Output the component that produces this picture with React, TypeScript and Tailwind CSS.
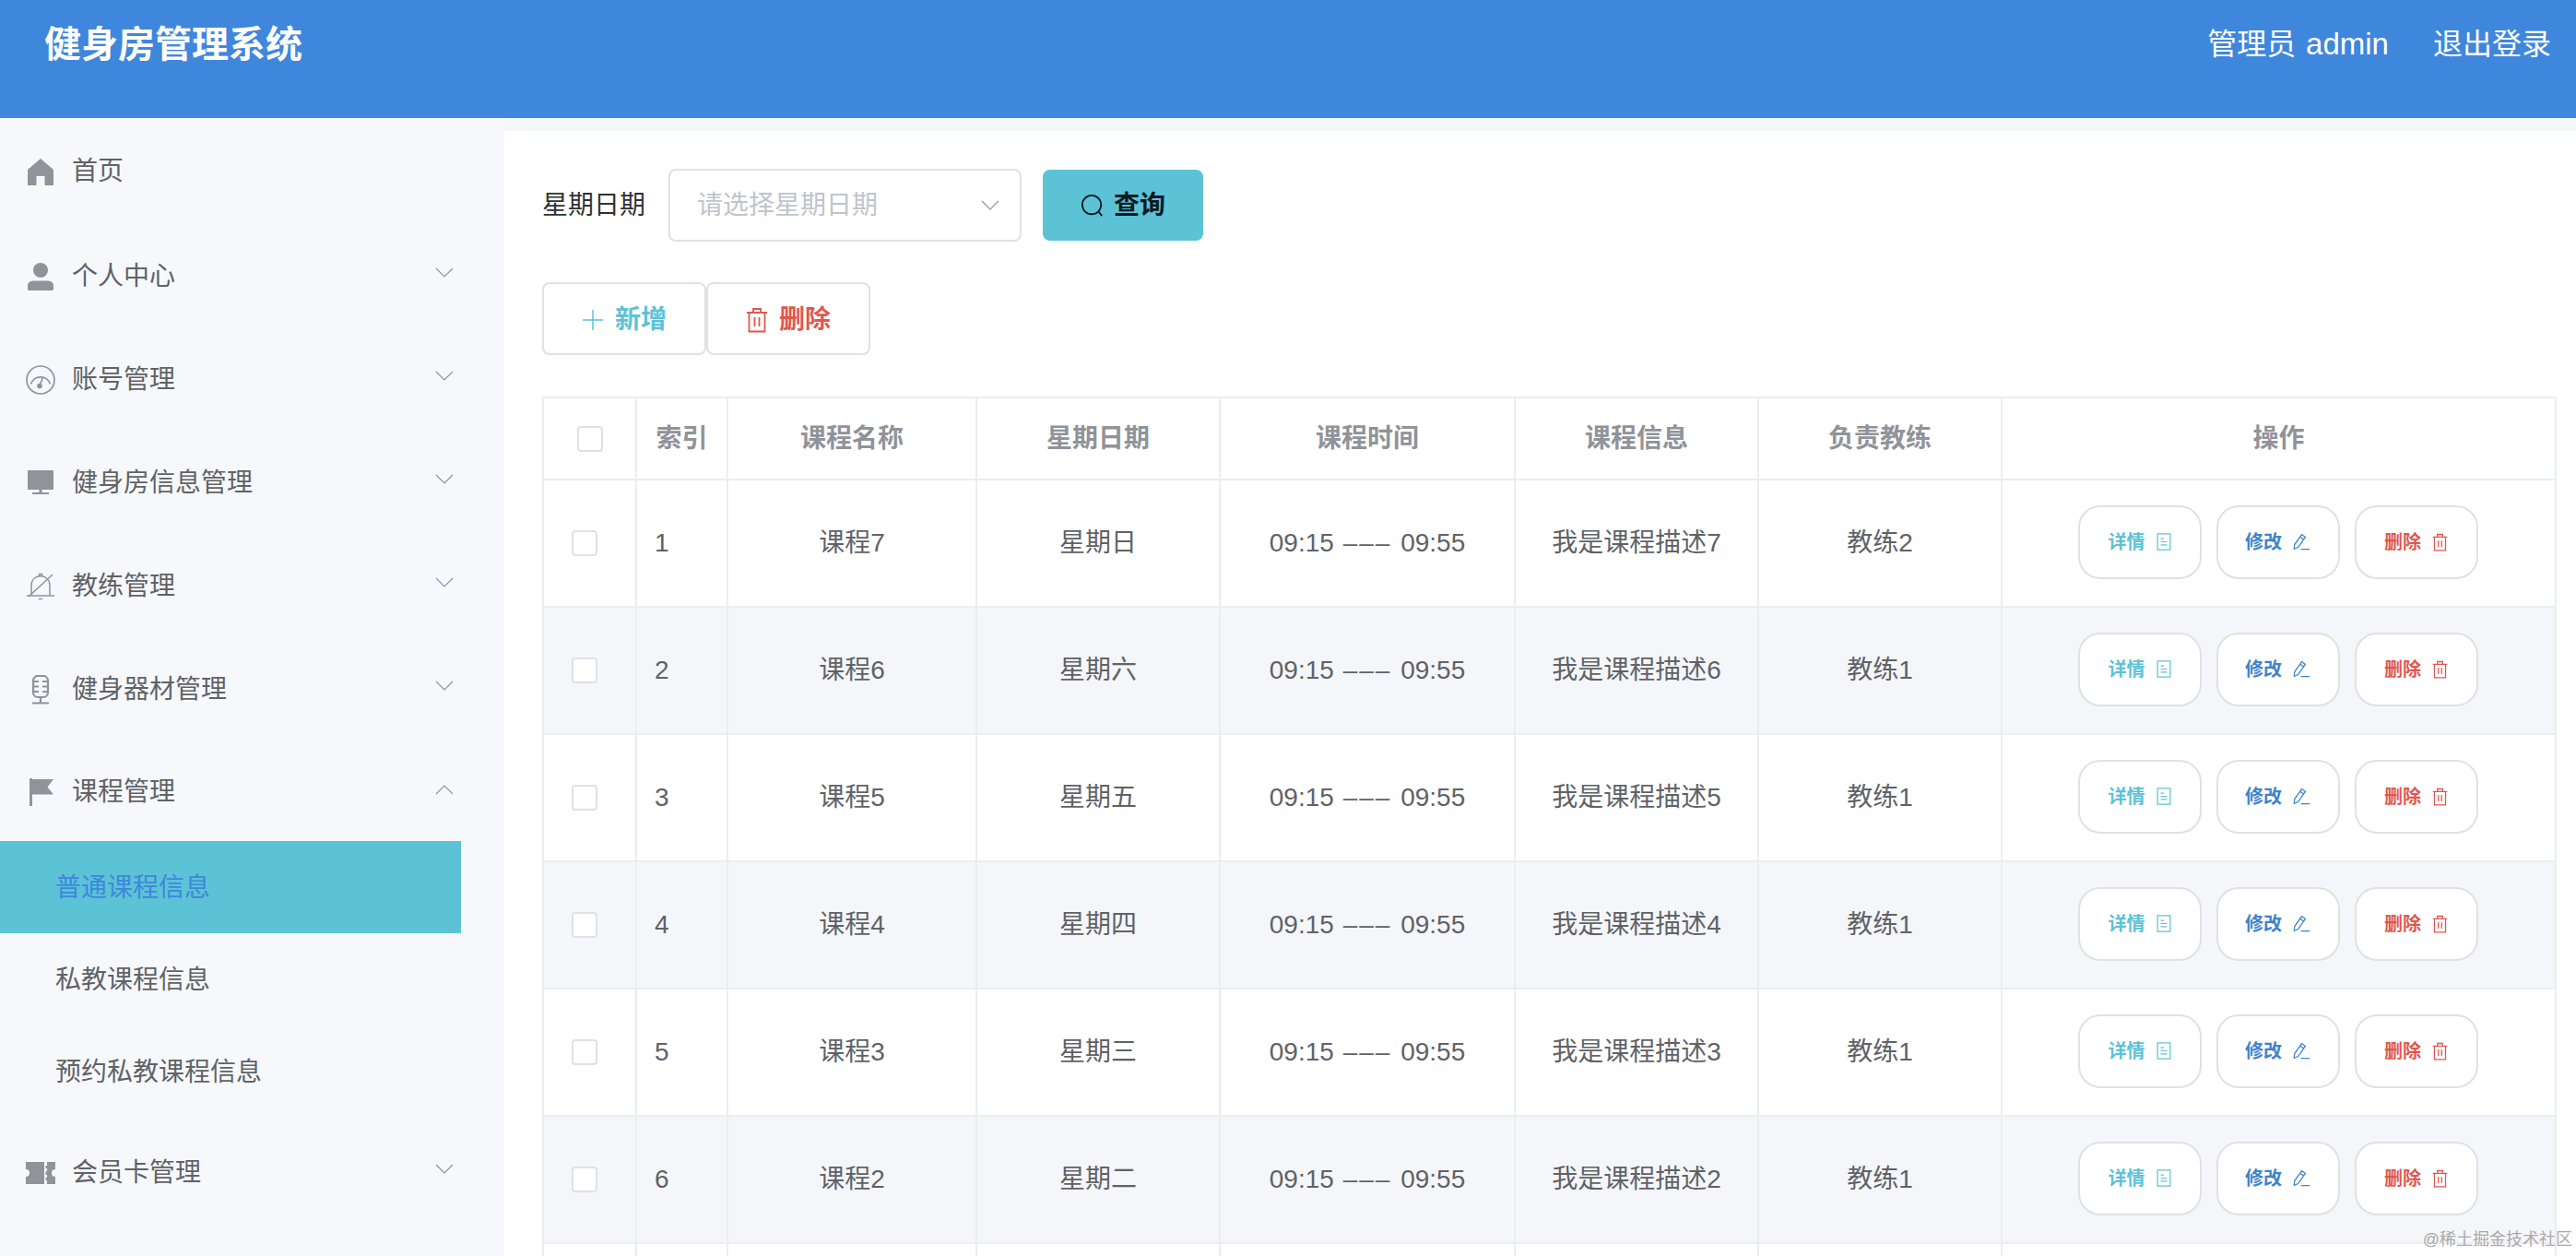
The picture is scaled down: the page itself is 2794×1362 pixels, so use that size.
import React from 'react'

const menuIcon = 'h-[32px] w-[32px] shrink-0 text-[#909399]'

function HomeIcon() {
  return (
    <svg viewBox="0 0 32 32" className={menuIcon} fill="currentColor">
      <path d="M16 2 L30 14 V31 H20.5 V21 H11.5 V31 H2 V14 Z" />
    </svg>
  )
}

function UserIcon() {
  return (
    <svg viewBox="0 0 32 32" className={menuIcon} fill="currentColor">
      <circle cx="16" cy="9" r="8" />
      <path d="M2 26 C2 22 5 20.5 9 20.5 H23 C27 20.5 30 22 30 26 V29 C30 30 29.5 31 28.5 31 H3.5 C2.5 31 2 30 2 29 Z" />
    </svg>
  )
}

function GaugeIcon() {
  return (
    <svg viewBox="0 0 32 32" className={menuIcon} fill="none" stroke="currentColor" strokeWidth="1.7">
      <circle cx="16" cy="16" r="15" />
      <path d="M5.5 20.5 A11 11 0 0 1 26.5 20.5" />
      <circle cx="15" cy="22.5" r="2" fill="currentColor" />
      <path d="M15.5 21 L18.5 13" />
    </svg>
  )
}

function MonitorIcon() {
  return (
    <svg viewBox="0 0 32 32" className={menuIcon} fill="currentColor">
      <path d="M2 2 H30 V23 H2 Z" />
      <path d="M14.5 23 H17.5 V26 H25 V28 H7 V26 H14.5 Z" />
    </svg>
  )
}

function BellOffIcon() {
  return (
    <svg viewBox="0 0 32 32" className={menuIcon} fill="none" stroke="currentColor" strokeWidth="1.5">
      <path d="M6 25 V15 C6 9 10 5 16 4.5 C22 5 26 9 26 15 V25" />
      <path d="M14.5 4.5 V2.5 H17.5 V4.5" />
      <path d="M1 26 H31" />
      <path d="M29 3 L3 27" />
      <path d="M14 29.5 H18" />
    </svg>
  )
}

function MicIcon() {
  return (
    <svg viewBox="0 0 32 32" className={menuIcon} fill="none" stroke="currentColor" strokeWidth="2.2">
      <rect x="8" y="1" width="16" height="23" rx="5" />
      <path d="M8 7 H14 M18 7 H24 M8 12.5 H14 M18 12.5 H24 M8 18 H14 M18 18 H24" />
      <path d="M16 24 V30 M7 30.5 H25" />
    </svg>
  )
}

function FlagIcon() {
  return (
    <svg viewBox="0 0 32 32" className={menuIcon} fill="currentColor">
      <path d="M4 1 H7 V31 H4 Z" />
      <path d="M7 2 H30 L23.5 10.5 L30 18.5 H7 Z" />
    </svg>
  )
}

function TicketIcon() {
  return (
    <svg viewBox="0 0 32 32" className={menuIcon} fill="currentColor">
      <path d="M0 4 H20 V28 H0 V20 A4 4 0 0 0 0 12 Z" />
      <path d="M23 4 H32 V12 A4 4 0 0 0 32 20 V28 H23 V24 H21.5 V21 H23 V18 H21.5 V14 H23 V11 H21.5 V8 H23 Z" />
    </svg>
  )
}

function Chevron({ up = false }: { up?: boolean }) {
  return (
    <svg viewBox="0 0 20 12" className="h-[12px] w-[20px] text-[#909399]" fill="none" stroke="currentColor" strokeWidth="1.2">
      <path d={up ? 'M1 11 L10 2 L19 11' : 'M1 1 L10 10 L19 1'} />
    </svg>
  )
}

function TrashIcon({ className }: { className: string }) {
  return (
    <svg viewBox="0 0 24 28" className={className} fill="none" stroke="currentColor" strokeWidth="1.8">
      <path d="M1 6 H23 M3.5 6 V26.5 H20.5 V6 M8 6 V2 H16 V6 M9.5 11 V21 M14.5 11 V21" />
    </svg>
  )
}

function DocIcon() {
  return (
    <svg viewBox="0 0 18 22" className="h-[19px] w-[16px]" fill="none" stroke="currentColor" strokeWidth="1.4">
      <path d="M1 1 H17 V21 H1 Z M5 7 H9 M5 11 H13 M5 15 H13" />
    </svg>
  )
}

function PenIcon() {
  return (
    <svg viewBox="0 0 22 22" className="h-[19px] w-[19px]" fill="none" stroke="currentColor" strokeWidth="1.5">
      <path d="M1.5 20 L2 14.5 L11 2 L15.5 5 L6.5 18 Z M9 5 L13.5 8.2 M10 20.5 H21" />
    </svg>
  )
}

const menu = [
  { label: '首页', icon: <HomeIcon />, nudge: 'pt-[4px]' },
  { label: '个人中心', icon: <UserIcon />, arrow: true },
  { label: '账号管理', icon: <GaugeIcon />, arrow: true },
  { label: '健身房信息管理', icon: <MonitorIcon />, arrow: true },
  { label: '教练管理', icon: <BellOffIcon />, arrow: true },
  { label: '健身器材管理', icon: <MicIcon />, arrow: true },
]

const rows = [
  { id: 1, name: '课程7', day: '星期日', desc: '我是课程描述7', coach: '教练2' },
  { id: 2, name: '课程6', day: '星期六', desc: '我是课程描述6', coach: '教练1' },
  { id: 3, name: '课程5', day: '星期五', desc: '我是课程描述5', coach: '教练1' },
  { id: 4, name: '课程4', day: '星期四', desc: '我是课程描述4', coach: '教练1' },
  { id: 5, name: '课程3', day: '星期三', desc: '我是课程描述3', coach: '教练1' },
  { id: 6, name: '课程2', day: '星期二', desc: '我是课程描述2', coach: '教练1' },
  { id: 7, name: '', day: '', desc: '', coach: '' },
]

const cell = 'border-2 border-[#ecedf1] text-center'
const head = 'border-2 border-[#ecedf1] text-center font-bold text-[#909399]'
const action = 'flex h-[80px] w-[134px] items-center justify-center gap-[12px] rounded-[24px] border-2 border-[#e0e1e5] bg-white text-[20px] font-bold'
const checkbox = 'block h-[28px] w-[28px] rounded-[4px] border-2 border-[#dfe1e6] bg-white'

function MenuRow({ label, icon, arrow, up, nudge = 'pt-[8px]' }: { label: string; icon: React.ReactNode; arrow?: boolean; up?: boolean; nudge?: string }) {
  return (
    <div className="flex h-[112px] w-[500px] items-center pl-[28px] pr-[8px] text-[28px] text-[#606266]">
      <div className={`flex flex-1 items-center ${nudge}`}>
        {icon}
        <span className="ml-[18px]">{label}</span>
      </div>
      {arrow && <Chevron up={up} />}
    </div>
  )
}

export default function App() {
  return (
    <div className="flex h-screen flex-col overflow-hidden bg-white font-['Liberation_Sans','Noto_Sans_CJK_SC',sans-serif]">
      {/* Header */}
      <header className="flex h-[128px] shrink-0 items-start justify-between bg-[#3f87dc] pl-[48px] pr-[27px] text-white">
        <h1 className="mt-[24px] text-[40px] leading-[48px] font-bold">健身房管理系统</h1>
        <div className="mt-[24px] flex gap-[48px] text-[32px] leading-[48px]">
          <span>
            管理员 <span className="ml-[2px] text-[33px]">admin</span>
          </span>
          <span>退出登录</span>
        </div>
      </header>

      <div className="flex flex-1 overflow-hidden">
        {/* Sidebar */}
        <aside className="w-[547px] shrink-0 bg-[#f6f8fc]">
          {menu.map((m) => (
            <MenuRow key={m.label} label={m.label} icon={m.icon} arrow={m.arrow} nudge={m.nudge} />
          ))}
          <MenuRow label="课程管理" icon={<FlagIcon />} arrow up nudge="pt-[6px]" />
          <div className="flex h-[100px] w-[500px] items-center bg-[#5cc2d6] pt-[2px] pl-[60px] text-[28px] text-[#3f87dc]">普通课程信息</div>
          <div className="flex h-[100px] w-[500px] items-center pt-[2px] pl-[60px] text-[28px] text-[#606266]">私教课程信息</div>
          <div className="flex h-[100px] w-[500px] items-center pt-[2px] pl-[60px] text-[28px] text-[#606266]">预约私教课程信息</div>
          <MenuRow label="会员卡管理" icon={<TicketIcon />} arrow />
        </aside>

        {/* Main content */}
        <main className="flex-1 bg-[#f5f8fa] pt-[14px]">
          <div className="h-full bg-white pt-[41px] pl-[41px]">
            <div className="flex h-[79px] items-center text-[28px]">
              <span className="w-[137px] text-[#303133]">星期日期</span>
              <div className="flex h-[79px] w-[383px] items-center justify-between rounded-[8px] border-2 border-[#dfe1e6] pr-[22px] pl-[29px] text-[#c0c4cc]">
                <span>请选择星期日期</span>
                <Chevron />
              </div>
              <button className="ml-[23px] flex h-[77px] w-[174px] items-center justify-center gap-[10px] rounded-[8px] bg-[#5cc2d6] font-bold text-[#0b1a20]">
                <svg viewBox="0 0 28 28" className="h-[26px] w-[26px]" fill="none" stroke="currentColor" strokeWidth="2">
                  <circle cx="13" cy="13" r="11" />
                  <path d="M21 21 L25 26" />
                </svg>
                查询
              </button>
            </div>

            <div className="mt-[44px] flex text-[28px] font-bold">
              <button className="flex h-[79px] w-[178px] items-center justify-center gap-[12px] rounded-[8px] border-2 border-[#dfe1e6] pt-[2px] text-[#5cc2d6]">
                <svg viewBox="0 0 26 26" className="h-[24px] w-[24px]" fill="none" stroke="currentColor" strokeWidth="1.6">
                  <path d="M13 1 V25 M1 13 H25" />
                </svg>
                新增
              </button>
              <button className="flex h-[79px] w-[178px] items-center justify-center gap-[12px] rounded-[8px] border-2 border-[#dfe1e6] pt-[2px] text-[#e0574f]">
                <TrashIcon className="h-[28px] w-[24px]" />
                删除
              </button>
            </div>

            <table className="mt-[45px] w-[2183px] table-fixed border-collapse text-[28px] text-[#606266]">
              <colgroup>
                <col className="w-[101px]" />
                <col className="w-[99px]" />
                <col className="w-[270px]" />
                <col className="w-[264px]" />
                <col className="w-[320px]" />
                <col className="w-[264px]" />
                <col className="w-[264px]" />
                <col className="w-[601px]" />
              </colgroup>
              <thead>
                <tr className="h-[89px]">
                  <th className={head}>
                    <span className={`mx-auto ${checkbox}`} />
                  </th>
                  <th className={head}>索引</th>
                  <th className={head}>课程名称</th>
                  <th className={head}>星期日期</th>
                  <th className={head}>课程时间</th>
                  <th className={head}>课程信息</th>
                  <th className={head}>负责教练</th>
                  <th className={head}>操作</th>
                </tr>
              </thead>
              <tbody>
                {rows.map((r) =>
                  r.name ? (
                    <tr key={r.id} className={r.id % 2 === 0 ? 'h-[138px] bg-[#f5f6fa]' : 'h-[138px] bg-white'}>
                      <td className={cell}>
                        <span className={`ml-[30px] ${checkbox}`} />
                      </td>
                      <td className="border-2 border-[#ecedf1] pl-[19px] text-left">{r.id}</td>
                      <td className={cell}>{r.name}</td>
                      <td className={cell}>{r.day}</td>
                      <td className={cell}>
                        09:15 <span className="mx-[2px] tracking-[2px]">–––</span> 09:55
                      </td>
                      <td className={cell}>{r.desc}</td>
                      <td className={cell}>{r.coach}</td>
                      <td className={cell}>
                        <div className="mb-[3px] flex justify-center gap-[16px] pr-[2px]">
                          <button className={`${action} text-[#5cc2d6]`}>
                            详情
                            <DocIcon />
                          </button>
                          <button className={`${action} text-[#3f83c9]`}>
                            修改
                            <PenIcon />
                          </button>
                          <button className={`${action} text-[#e0574f]`}>
                            删除
                            <TrashIcon className="h-[20px] w-[17px]" />
                          </button>
                        </div>
                      </td>
                    </tr>
                  ) : (
                    <tr key={r.id} className="h-[138px]">
                      {Array.from({ length: 8 }).map((_, i) => (
                        <td key={i} className={cell} />
                      ))}
                    </tr>
                  ),
                )}
              </tbody>
            </table>
          </div>
        </main>
      </div>

      {/* Watermark */}
      <span className="absolute right-[4px] bottom-[4px] text-[18px] text-[#a9a9a9]">@稀土掘金技术社区</span>
    </div>
  )
}
